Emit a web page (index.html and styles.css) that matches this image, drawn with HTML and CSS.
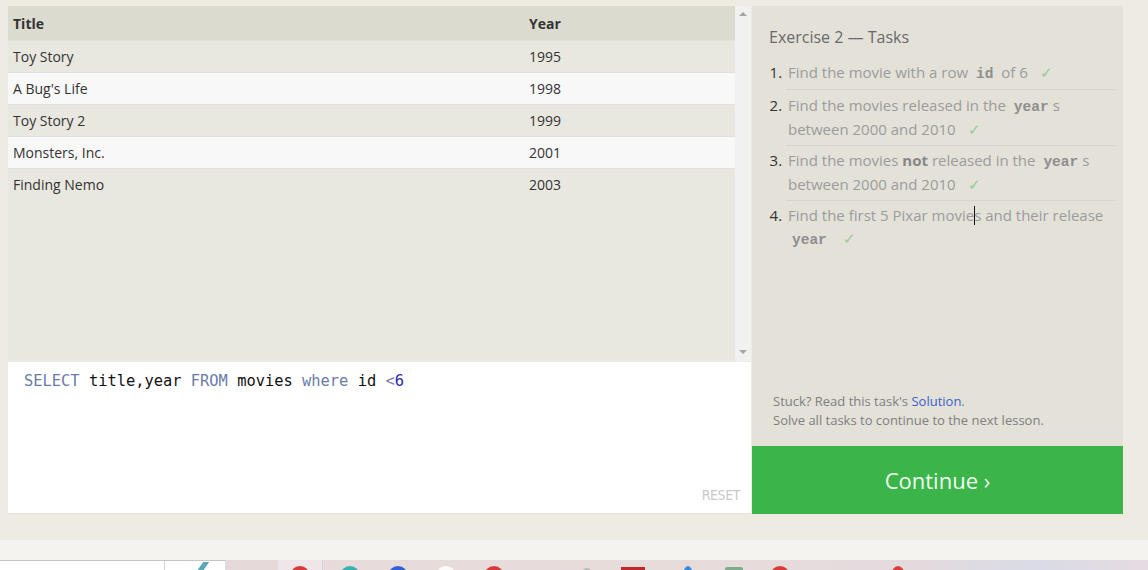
FILE: index.html
```html
<!DOCTYPE html>
<html>
<head>
<meta charset="utf-8">
<link rel="stylesheet" href="styles.css">
</head>
<body>
<div class="page">
  <div class="main">
    <div class="left">
      <div class="results">
        <div class="table-wrap">
          <table class="grid">
            <thead>
              <tr><th class="c-title">Title</th><th class="c-year">Year</th></tr>
            </thead>
            <tbody>
              <tr><td>Toy Story</td><td>1995</td></tr>
              <tr><td>A Bug's Life</td><td>1998</td></tr>
              <tr><td>Toy Story 2</td><td>1999</td></tr>
              <tr><td>Monsters, Inc.</td><td>2001</td></tr>
              <tr><td>Finding Nemo</td><td>2003</td></tr>
            </tbody>
          </table>
        </div>
        <div class="scrollbar">
          <span class="arrow up"></span>
          <span class="arrow down"></span>
        </div>
      </div>
      <div class="editor">
        <div class="code"><span class="kw">SELECT</span> title,year <span class="kw">FROM</span> movies <span class="kw">where</span> id <span class="op">&lt;</span><span class="num">6</span></div>
        <div class="reset">RESET</div>
      </div>
    </div>
    <div class="right">
      <div class="panel">
        <h2 class="panel-title">Exercise 2 — Tasks</h2>
        <ol class="tasks">
          <li>Find the movie with a row <code>id</code> of 6 <span class="check">✓</span></li>
          <li>Find the movies released in the <code>year</code>s between 2000 and 2010 <span class="check">✓</span></li>
          <li>Find the movies <b>not</b> released in the <code>year</code>s between 2000 and 2010 <span class="check">✓</span></li>
          <li>Find the first 5 Pixar movie<span class="caret"></span>s and their release <code>year</code> <span class="check">✓</span></li>
        </ol>
        <div class="stuck">
          <p>Stuck? Read this task's <a href="#">Solution</a>.</p>
          <p>Solve all tasks to continue to the next lesson.</p>
        </div>
      </div>
      <div class="continue">Continue ›</div>
    </div>
  </div>
  <div class="band"></div>
  <div class="taskbar">
    <div class="search"><span class="sep"></span><span class="teal"></span></div>
    <div class="tb-active"><span class="ico red"></span></div>
    <div class="tb-icons">
      <span class="ico teal2 m1"></span>
      <span class="ico blue m2"></span>
      <span class="ico white m2"></span>
      <span class="ico red m2"></span>
      <span class="ico gray m3"></span>
      <span class="ico redrect m4"></span>
      <span class="ico bluesm m5"></span>
      <span class="ico greenrect m6"></span>
      <span class="ico red m7"></span>
      <span class="ico orange m8"></span>
    </div>
  </div>
</div>
</body>
</html>
```

FILE: styles.css
```css
* { box-sizing: border-box; }
html, body { margin: 0; padding: 0; }
body {
  background: #eeebe3;
  font-family: "Open Sans", "Liberation Sans", sans-serif;
  width: 1148px;
  height: 570px;
  overflow: hidden;
}
.page { display: flex; flex-direction: column; height: 570px; }
.main {
  display: flex;
  padding: 6px 25px 0 8px;
  height: 540px;
}
.left {
  width: 743px;
  display: flex;
  flex-direction: column;
  gap: 1px;
}
.results {
  display: flex;
  height: 355px;
}
.table-wrap {
  flex: 1;
  background: #e9e8e0;
  overflow: hidden;
}
.grid {
  border-collapse: collapse;
  width: 100%;
  font-size: 14px;
  color: #333;
}
.grid th {
  background: #dcdbd0;
  height: 34px;
  text-align: left;
  font-weight: 700;
  padding: 2px 5px 0;
  border-bottom: 1px solid #e2e1d9;
}
.grid th.c-title { width: 516px; }
.grid td {
  height: 32px;
  padding: 0 5px;
  border-bottom: 1px solid #e1e0da;
}
.grid tbody tr:nth-child(odd) td { background: #e9e8e0; }
.grid tbody tr:nth-child(even) td { background: #f8f8f8; }
.grid tbody tr:last-child td { border-bottom: none; }
.scrollbar {
  width: 16px;
  background: #f1f1f1;
  display: flex;
  flex-direction: column;
  justify-content: space-between;
  align-items: center;
  padding: 6px 0 7px;
}
.arrow {
  width: 0; height: 0;
  border-left: 4px solid transparent;
  border-right: 4px solid transparent;
}
.arrow.up { border-bottom: 4px solid #a6a6a6; }
.arrow.down { border-top: 4px solid #a6a6a6; }
.editor {
  height: 152px;
  background: #fff;
  border-bottom: 1px solid #e4e2da;
  display: flex;
  flex-direction: column;
  justify-content: space-between;
  padding: 9px 11px 10px 16px;
}
.code {
  font-family: "DejaVu Sans Mono", "Liberation Mono", monospace;
  font-size: 15.4px;
  line-height: 20px;
  color: #111;
}
.code .kw { color: #6a7ca6; }
.code .op { color: #7d7dac; }
.code .num { color: #2a2aa8; }
.reset {
  align-self: flex-end;
  font-family: "DejaVu Sans Condensed", "Liberation Sans Narrow", sans-serif;
  font-size: 14px;
  color: #c9c9c9;
  letter-spacing: -0.4px;
}
.right {
  width: 371px;
  margin-left: 1px;
  display: flex;
  flex-direction: column;
  height: 508px;
}
.panel {
  height: 440px;
  background: #e3e1d8;
  display: flex;
  flex-direction: column;
  padding: 19px 8px 16px 17px;
}
.panel-title {
  margin: 0;
  font-size: 16px;
  line-height: 24px;
  font-weight: 400;
  color: #6a6a6a;
}
.tasks {
  margin: 8px 0 0;
  padding: 0 0 0 17px;
  font-size: 15px;
  line-height: 24px;
  color: #9c9c9c;
}
.tasks li {
  padding: 3px 0 4px 2px;
  border-bottom: 1px solid #d6d4cb;
}
.tasks li:first-child { padding-bottom: 5px; }
.tasks li:nth-child(3) { padding-top: 2px; }
.tasks li:last-child { border-bottom: none; line-height: 23px; }
.tasks li::marker { color: #333; }
.tasks b { color: #888; font-weight: 700; }
.tasks code {
  font-family: "Liberation Mono", "DejaVu Sans Mono", monospace;
  font-weight: 700;
  font-size: 14.5px;
  line-height: 0;
  color: #8e8e8e;
  padding: 0 4px;
}
.check { color: #95cc95; margin-left: 8px; line-height: 0; }
.caret {
  display: inline-block;
  width: 1px;
  height: 19px;
  background: #111;
  vertical-align: -4px;
  margin-right: -1px;
}
.stuck {
  margin-top: auto;
  padding-left: 4px;
  font-size: 13px;
  line-height: 19px;
  color: #808080;
}
.stuck p { margin: 0; }
.stuck a { color: #3a63c8; text-decoration: none; }
.continue {
  height: 68px;
  background: #3bb44a;
  color: #f0fff0;
  font-size: 22px;
  display: flex;
  align-items: center;
  justify-content: center;
}
.band { height: 20px; background: #f5f3ef; }
.taskbar {
  height: 10px;
  display: flex;
  overflow: hidden;
  background: linear-gradient(90deg, #e7dada 0%, #e8dcdb 60%, #e4dade 80%, #d9dbe6 90%, #e6dbe2 100%);
}
.search {
  width: 226px;
  background: #fff;
  border-top: 1px solid #c4c4c4;
  border-right: 1px solid #ddd;
  display: flex;
  align-items: flex-start;
  padding-left: 164px;
}
.search .sep { width: 1px; height: 10px; background: #d4d4d4; }
.search .teal {
  width: 6px; height: 12px;
  margin-left: 34px; margin-top: 1px;
  background: #5aa7b8;
  transform: skewX(-35deg);
}
.tb-active {
  width: 97px;
  display: flex;
  justify-content: flex-end;
  padding-right: 12px;
  background: linear-gradient(90deg, #e6d9da 0, #e6d9da 52px, #efe6e9 52px);
  border-right: 1px solid #d8cfd2;
}
.tb-icons { display: flex; align-items: flex-start; }
.ico {
  display: block;
  width: 20px; height: 20px;
  border-radius: 50%;
  margin-top: 6px;
}
.ico.red { background: #d83a3a; }
.ico.teal2 { background: #3bb0b0; }
.ico.blue { background: #3060d8; }
.ico.white { background: #fbfbfb; }
.ico.gray { background: #b8b8b8; width: 8px; height: 8px; margin-top: 8px; }
.ico.redrect { background: #c0282c; border-radius: 0; width: 24px; margin-top: 7px; }
.ico.bluesm { background: #3a8ad8; width: 10px; }
.ico.greenrect { background: #7cae8a; border-radius: 2px; width: 18px; margin-top: 7px; }
.ico.orange { background: #d84040; width: 14px; }
.m1 { margin-left: 17px; }
.m2 { margin-left: 28px; }
.m3 { margin-left: 79px; }
.m4 { margin-left: 30px; }
.m5 { margin-left: 38px; }
.m6 { margin-left: 32px; }
.m7 { margin-left: 27px; }
.m8 { margin-left: 101px; }
```
